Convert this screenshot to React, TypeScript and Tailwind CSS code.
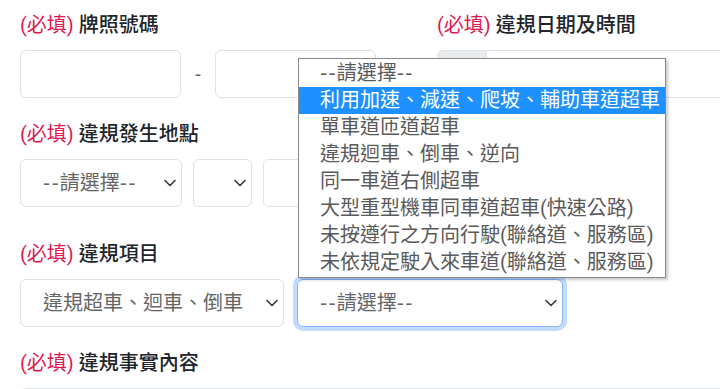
import React from "react";

const font = { fontFamily: 'Roboto, "Noto Sans CJK TC", sans-serif' };

function Label({ text }: { text: string }) {
  return (
    <div className="h-[30px] leading-[30px] text-[20px] font-medium text-[#212529] whitespace-nowrap">
      <span className="text-[#e0194f] font-normal">(必填)</span> {text}
    </div>
  );
}

function Dash() {
  return <span className="tracking-[1.2px]" style={{ fontFamily: '"DejaVu Sans", sans-serif' }}>--</span>;
}

function Placeholder() {
  return (
    <>
      <Dash />
      請選擇
      <Dash />
    </>
  );
}

function Chevron() {
  return (
    <svg width="12" height="8" viewBox="0 0 12 8" className="flex-none">
      <path d="M1 1.5 6 6.5 11 1.5" fill="none" stroke="#343a40" strokeWidth="1.6" strokeLinecap="round" strokeLinejoin="round" />
    </svg>
  );
}

function Select({ w, children, focus }: { w: string; children?: React.ReactNode; focus?: boolean }) {
  return (
    <div
      className={`${w} h-[48px] flex-none flex items-center justify-between pl-[22px] pr-[5px] rounded-[6px] bg-white border ${
        focus ? "border-[#86b7fe] shadow-[0_0_0_4px_rgba(13,110,253,0.25)]" : "border-[#dee2e6]"
      }`}
    >
      <span className="text-[20px] text-[#666] whitespace-nowrap overflow-hidden">{children}</span>
      <Chevron />
    </div>
  );
}

const options = [
  "利用加速、減速、爬坡、輔助車道超車",
  "單車道匝道超車",
  "違規迴車、倒車、逆向",
  "同一車道右側超車",
  "大型重型機車同車道超車(快速公路)",
  "未按遵行之方向行駛(聯絡道、服務區)",
  "未依規定駛入來車道(聯絡道、服務區)",
];

export default function App() {
  return (
    <div className="w-[720px] h-[389px] overflow-hidden bg-white pt-[10px] pl-[20px]" style={font}>
      {/* Row 1 */}
      <div className="flex">
        <div className="w-[417px] flex-none">
          <Label text="牌照號碼" />
          <div className="flex items-center mt-[10px]">
            <div className="w-[161px] h-[48px] rounded-[6px] border border-[#dee2e6] bg-white" />
            <div className="w-[34px] text-center text-[20px] text-[#666]">-</div>
            <div className="w-[161px] h-[48px] rounded-[6px] border border-[#dee2e6] bg-white" />
          </div>
        </div>
        <div className="w-[340px] flex-none">
          <Label text="違規日期及時間" />
          <div className="flex mt-[10px]">
            <div className="w-[50px] h-[48px] flex-none bg-[#e9ecef] border border-[#dee2e6] rounded-l-[6px]" />
            <div className="flex-1 h-[48px] border-y border-[#dee2e6] bg-white" />
          </div>
        </div>
      </div>

      {/* Row 2 */}
      <div className="mt-[21px]">
        <Label text="違規發生地點" />
        <div className="flex gap-[11px] mt-[10px]">
          <Select w="w-[162px]">
            <Placeholder />
          </Select>
          <Select w="w-[59px]" />
          <Select w="w-[120px]" />
        </div>
      </div>

      {/* Row 3 */}
      <div className="mt-[32px]">
        <Label text="違規項目" />
        <div className="flex gap-[13px] mt-[10px]">
          <Select w="w-[264px]">違規超車、迴車、倒車</Select>
          <div className="relative">
            <Select w="w-[266px]" focus>
              <Placeholder />
            </Select>
            <div className="absolute left-[1px] bottom-[calc(100%+1px)] w-[368px] py-[1px] bg-white border border-[#8a8a8a] shadow-[2px_2px_3px_rgba(0,0,0,0.22)] z-10">
              <div className="h-[27px] leading-[27px] pl-[21px] text-[20px] whitespace-nowrap text-[#5a5a5a]">
                <Placeholder />
              </div>
              {options.map((o, i) => (
                <div
                  key={o}
                  className={`h-[27px] leading-[27px] pl-[21px] text-[20px] whitespace-nowrap ${
                    i === 0 ? "bg-[#1e90ff] text-white" : "text-[#5a5a5a]"
                  }`}
                >
                  {o}
                </div>
              ))}
            </div>
          </div>
        </div>
      </div>

      {/* Row 4 */}
      <div className="mt-[21px]">
        <Label text="違規事實內容" />
        <div className="mt-[10px] w-[720px] h-[80px] rounded-t-[6px] border border-[#dee2e6] bg-white" />
      </div>
    </div>
  );
}
